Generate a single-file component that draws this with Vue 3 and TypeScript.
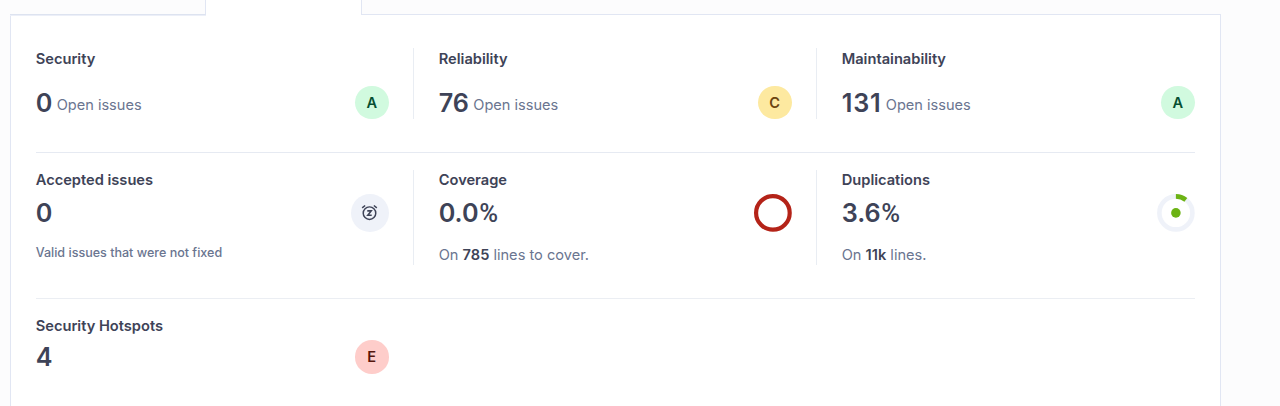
<script setup lang="ts">
interface Metric {
  title: string
  value: string
  unit?: string
  suffix?: string
  note?: string
  detail?: { before: string; strong: string; after: string }
  rating?: 'A' | 'C' | 'E'
  icon?: 'snooze' | 'coverage' | 'duplication'
}

const rows: Metric[][] = [
  [
    { title: 'Security', value: '0', suffix: 'Open issues', rating: 'A' },
    { title: 'Reliability', value: '76', suffix: 'Open issues', rating: 'C' },
    { title: 'Maintainability', value: '131', suffix: 'Open issues', rating: 'A' },
  ],
  [
    { title: 'Accepted issues', value: '0', note: 'Valid issues that were not fixed', icon: 'snooze' },
    { title: 'Coverage', value: '0.0', unit: '%', detail: { before: 'On ', strong: '785', after: ' lines to cover.' }, icon: 'coverage' },
    { title: 'Duplications', value: '3.6', unit: '%', detail: { before: 'On ', strong: '11k', after: ' lines.' }, icon: 'duplication' },
  ],
  [{ title: 'Security Hotspots', value: '4', rating: 'E' }],
]
</script>

<template>
  <main class="page">
    <div class="tabs">
      <div class="tab first"></div>
      <div class="tab active"></div>
      <div class="tab rest"></div>
    </div>
    <section class="panel">
      <div v-for="(row, i) in rows" :key="i" class="row" :class="'row-' + (i + 1)">
        <article v-for="m in row" :key="m.title" class="cell">
          <h3 class="title">{{ m.title }}</h3>
          <div class="main">
            <div class="figures">
              <span class="value" :class="{ wide: m.value === '131' }">{{ m.value }}<span v-if="m.unit" class="unit">{{ m.unit }}</span></span>
              <span v-if="m.suffix" class="suffix">{{ m.suffix }}</span>
            </div>
            <span v-if="m.rating" class="rating" :class="'rating-' + m.rating">{{ m.rating }}</span>
            <span v-else-if="m.icon === 'snooze'" class="snooze">
              <svg width="17" height="17" viewBox="0 0 16 16" fill="none" stroke="#3e4357">
                <circle cx="8" cy="8.6" r="5.9" stroke-width="1.4" />
                <path d="M1.1 3.7 3.9 1.4M14.9 3.7 12.1 1.4" stroke-width="1.4" />
                <path d="M5.9 6.5h3.7L6.4 10.6H10.1" stroke-width="1.5" />
              </svg>
            </span>
            <svg v-else-if="m.icon === 'coverage'" class="ring" viewBox="0 0 38 38" fill="none">
              <circle cx="19" cy="19" r="16.9" stroke="#b42318" stroke-width="4.2" />
            </svg>
            <svg v-else class="ring" viewBox="0 0 38 38" fill="none">
              <circle cx="19" cy="19" r="16.6" stroke="#eff2f9" stroke-width="4.6" />
              <path d="M19 2.4A16.6 16.6 0 0 1 29 5.8" stroke="#6cb314" stroke-width="4.7" />
              <circle cx="19" cy="19" r="4.8" fill="#6cb314" />
            </svg>
          </div>
          <p v-if="m.note" class="note">{{ m.note }}</p>
          <p v-if="m.detail" class="detail">{{ m.detail.before }}<b>{{ m.detail.strong }}</b>{{ m.detail.after }}</p>
        </article>
      </div>
    </section>
  </main>
</template>

<style>
body {
  margin: 0;
  background: #fcfcfd;
}
</style>

<style scoped>
.page {
  box-sizing: border-box;
  width: 1280px;
  height: 406px;
  padding-left: 10px;
  overflow: hidden;
  background: #fcfcfd;
  color: #3e4357;
  font-family: Inter, "Liberation Sans", sans-serif;
  font-size: 14.6px;
}
.tabs {
  display: flex;
  width: 1211px;
  height: 15px;
}
.tab {
  box-sizing: border-box;
}
.first {
  width: 196px;
  border-right: 1px solid #e1e6f3;
  border-bottom: 1px solid #dde3f0;
  box-shadow: 0 1px 0 #eceff8;
}
.active {
  width: 155px;
  background: #fff;
}
.rest {
  flex: 1;
  border-left: 1px solid #e1e6f3;
  border-bottom: 1px solid #e1e6f3;
}
.panel {
  box-sizing: border-box;
  width: 1211px;
  height: 400px;
  padding: 0 25px;
  border: solid #e1e6f3;
  border-width: 0 1px;
  background: #fff;
}
.row {
  box-sizing: border-box;
  display: flex;
  gap: 25px;
}
.row-1 {
  height: 138px;
  padding: 33px 0;
  border-bottom: 1px solid #e6eaf2;
}
.row-2 {
  height: 146px;
  padding: 17px 0 33px;
  border-bottom: 1px solid #ebeef3;
}
.row-3 {
  height: 95px;
  padding: 17px 0;
}
.cell {
  box-sizing: border-box;
  width: 378px;
  padding-right: 24.5px;
  border-right: 1px solid #e9edf3;
}
.cell:nth-child(3) {
  width: 353px;
  padding-right: 0.5px;
  border-right: 0;
}
.row-3 .cell {
  border-right-color: transparent;
}
.title {
  margin: 0 0 0 -0.3px;
  font-size: 14.65px;
  line-height: 21px;
  font-weight: 600;
}
.row-1 .title {
  line-height: 23px;
}
.main {
  display: flex;
  align-items: center;
  justify-content: space-between;
  height: 33.6px;
  margin-top: 3px;
}
.row-1 .main {
  margin-top: 14.9px;
}
.row-2 .main {
  height: 38px;
}
.figures {
  display: flex;
  align-items: center;
  gap: 4.4px;
}
.value {
  margin-left: -0.3px;
  font-size: 25.2px;
  line-height: 34px;
  font-weight: 600;
}
.row-1 .value {
  padding-top: 1.6px;
}
.wide {
  letter-spacing: 0.8px;
}
.unit {
  margin-left: 0.6px;
  font-family: Roboto, sans-serif;
  font-size: 25.6px;
  font-weight: 500;
}
.suffix {
  padding-top: 6px;
  font-size: 14.55px;
  line-height: 21px;
  color: #6a7590;
}
.rating {
  box-sizing: border-box;
  display: flex;
  align-items: center;
  justify-content: center;
  width: 33.6px;
  height: 33.6px;
  padding-top: 1px;
  border-radius: 50%;
  font-weight: 600;
  line-height: 21px;
}
.rating-A {
  background: #d1fadf;
  color: #054f31;
}
.rating-C {
  background: #fde9a0;
  color: #6b4410;
}
.rating-E {
  background: #fecdca;
  color: #55160c;
}
.snooze {
  display: flex;
  align-items: center;
  justify-content: center;
  width: 37.8px;
  height: 37.8px;
  border-radius: 50%;
  background: #eff2f9;
}
.ring {
  width: 37.8px;
  height: 37.8px;
  overflow: visible;
}
.note,
.detail {
  margin: 13px 0 0 -0.3px;
  color: #6a7590;
}
.note {
  margin-top: 12px;
  font-size: 12.55px;
  line-height: 17px;
  font-weight: 500;
}
.detail {
  line-height: 21px;
}
.detail b {
  font-weight: 600;
  color: #3e4357;
}
</style>
